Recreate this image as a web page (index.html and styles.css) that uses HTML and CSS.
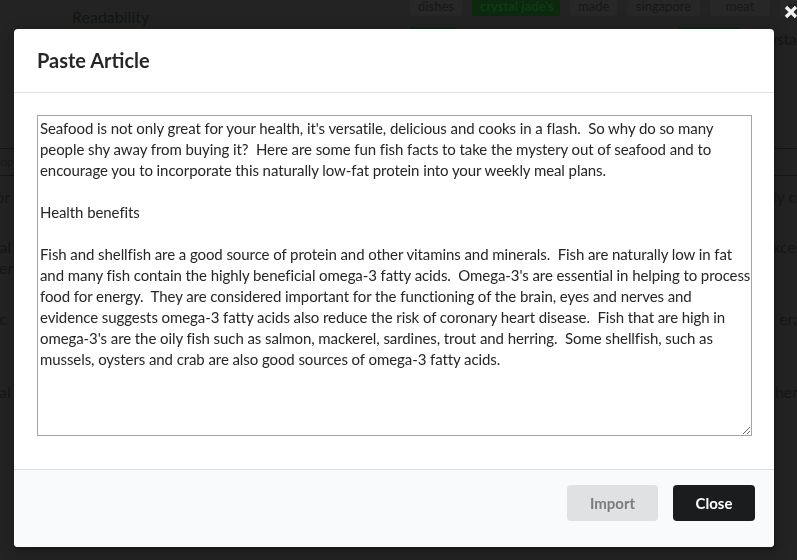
FILE: index.html
```html
<!DOCTYPE html>
<html>
<head>
<meta charset="utf-8">
<link rel="stylesheet" href="styles.css">
</head>
<body>
<div class="page">
  <div class="topbar">
    <div class="brand"><span class="brand-text">Readability</span></div>
    <div class="tags">
      <span class="tag t1">dishes</span>
      <span class="tag green t2">crystal jade's</span>
      <span class="tag t3">made</span>
      <span class="tag t4">singapore</span>
      <span class="tag t5">meat</span>
      <span class="tag">roast</span>
    </div>
  </div>
  <div class="tags row2">
    <span class="tag green w1">&nbsp;</span>
    <span class="tag green w2">&nbsp;</span>
    <span class="faint">crystal</span>
  </div>
  <div class="tabline"><span class="tab">topic</span></div>
  <div class="bgrows">
    <div class="bgrow r1"><span>for</span><span>ly co</span></div>
    <div class="bgrow r2"><span>ital</span><span>xcep</span></div>
    <div class="bgrow r3"><span>ner</span><span></span></div>
    <div class="bgrow r4"><span>r c</span><span>eral</span></div>
    <div class="bgrow r5"><span>nal</span><span>hers</span></div>
    <div class="bgrow r6"><span>e</span><span></span></div>
  </div>
</div>

<div class="dimmer">
  <svg class="close-x" width="16" height="16" viewBox="0 0 16 16"><path d="M3 3 L13 13 M13 3 L3 13" stroke="#f2f2f2" stroke-width="3.4" stroke-linecap="butt"/></svg>
  <div class="modal">
    <div class="modal-header">Paste Article</div>
    <div class="modal-content">
      <textarea class="article">Seafood is not only great for your health, it's versatile, delicious and cooks in a flash.  So why do so many
people shy away from buying it?  Here are some fun fish facts to take the mystery out of seafood and to
encourage you to incorporate this naturally low-fat protein into your weekly meal plans.

Health benefits

Fish and shellfish are a good source of protein and other vitamins and minerals.  Fish are naturally low in fat
and many fish contain the highly beneficial omega-3 fatty acids.  Omega-3's are essential in helping to process
food for energy.  They are considered important for the functioning of the brain, eyes and nerves and
evidence suggests omega-3 fatty acids also reduce the risk of coronary heart disease.  Fish that are high in
omega-3's are the oily fish such as salmon, mackerel, sardines, trout and herring.  Some shellfish, such as
mussels, oysters and crab are also good sources of omega-3 fatty acids.</textarea>
    </div>
    <div class="modal-actions">
      <button class="btn btn-import">Import</button>
      <button class="btn btn-close">Close</button>
    </div>
  </div>
</div>
</body>
</html>
```

FILE: styles.css
```css
html, body {
  margin: 0;
  padding: 0;
  height: 100%;
  overflow: hidden;
}
body {
  background: #232323;
  font-family: Lato, "Liberation Sans", sans-serif;
  font-size: 14px;
  color: #181818;
}

/* background page (dimmed) */
.page {
  height: 560px;
}
.topbar {
  display: flex;
  height: 28px;
}
.brand {
  flex: none;
  width: 410px;
  padding-left: 72px;
  box-sizing: border-box;
}
.brand-text {
  display: inline-block;
  font-size: 16px;
  line-height: 18px;
  padding-top: 8px;
  color: #151515;
  border-bottom: 2px solid #2a2418;
  padding-bottom: 2px;
}
.tags {
  display: flex;
  gap: 10px;
  margin-top: -4px;
  white-space: nowrap;
}
.tag {
  flex: none;
  display: inline-block;
  background: #272727;
  color: #171717;
  font-size: 13px;
  line-height: 20px;
  padding: 0 8px;
  border-radius: 3px;
  height: 20px;
  text-align: center;
  box-sizing: border-box;
  white-space: nowrap;
}
.t1 { width: 52px; }
.t2 { width: 88px; }
.t3 { width: 47px; }
.t4 { width: 73px; }
.t5 { width: 60px; }
.tag.green {
  background: #0c280f;
  color: #0d3b13;
  font-weight: 700;
}
.row2 {
  margin-top: -1px;
  padding-left: 410px;
  align-items: flex-start;
}
.row2 .w1 { width: 47px; }
.row2 .w2 { width: 62px; margin-left: 211px; }
.faint {
  margin-left: 7px;
  padding-top: 3px;
  font-size: 15px;
  color: #151515;
}
.tabline {
  margin-top: 100px;
  border-top: 1px solid #161616;
  border-bottom: 1px solid #161616;
  height: 26px;
}
.tab {
  display: inline-block;
  margin-left: -10px;
  padding: 0 6px;
  border-right: 1px solid #181818;
  line-height: 26px;
  font-size: 12px;
  color: #1a1a1a;
}
.bgrows {
  font-size: 16px;
  color: #171717;
}
.bgrow {
  display: flex;
  justify-content: space-between;
  line-height: 21px;
}
.bgrow span:first-child { margin-left: -10px; }
.bgrow span:last-child { margin-right: -8px; }
.r1 { margin-top: 10px; }
.r2 { margin-top: 29px; }
.r4 { margin-top: 30px; }
.r5 { margin-top: 52px; }
.r6 { margin-top: 39px; }

/* modal */
.dimmer {
  position: fixed;
  inset: 0;
  padding: 29px 23px 13px 14px;
}
.close-x {
  position: absolute;
  left: 783px;
  top: 4px;
}
.modal {
  width: 760px;
  background: #fff;
  border-radius: 4px;
  overflow: hidden;
  box-shadow: 1px 3px 3px 0 rgba(0,0,0,.2), 1px 3px 15px 2px rgba(0,0,0,.2);
}
.modal-header {
  padding: 19px 23px 19px;
  font-size: 20px;
  line-height: 25px;
  font-weight: 700;
  color: rgba(0,0,0,.85);
  border-bottom: 1px solid #e3e3e3;
}
.modal-content {
  padding: 22px 22px 33px 23px;
}
.article {
  display: block;
  box-sizing: border-box;
  width: 100%;
  height: 321px;
  margin: 0;
  padding: 2px 0 2px 2px;
  border: 1px solid #85a9e6;
  outline: none;
  resize: both;
  overflow: hidden;
  font-family: Lato, "Liberation Sans", sans-serif;
  font-size: 15px;
  line-height: 21px;
  letter-spacing: -0.08px;
  color: #262626;
  background: #fff;
}
.modal-actions {
  display: flex;
  justify-content: flex-end;
  gap: 15px;
  padding: 15px 19px 26px;
  background: #f9fafb;
  border-top: 1px solid #dcdcdc;
}
.btn {
  font-family: Lato, "Liberation Sans", sans-serif;
  font-weight: 700;
  font-size: 15px;
  line-height: 14px;
  height: 36px;
  padding: 11px 0;
  border: none;
  border-radius: 4px;
  box-sizing: border-box;
  text-align: center;
}
.btn-import {
  background: #e0e1e2;
  color: #7b7b7b;
  width: 91px;
}
.btn-close {
  background: #1b1c1d;
  color: #fff;
  width: 82px;
}
```
